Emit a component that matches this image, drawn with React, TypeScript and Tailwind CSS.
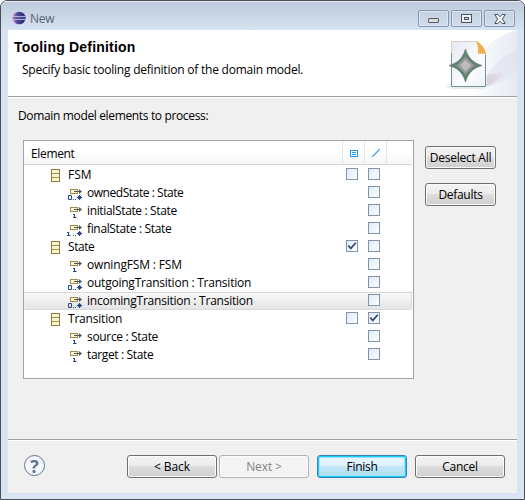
import type { ReactNode } from "react";

type Kind = "class" | "one" | "zeroMany" | "oneMany";
type Check = boolean | null;

interface Row {
  label: string;
  kind: Kind;
  node: Check;
  link: Check;
  track: string;
  selected?: boolean;
}

const rows: Row[] = [
  { label: "FSM", kind: "class", node: false, link: false, track: "tracking-[0px]" },
  { label: "ownedState : State", kind: "zeroMany", node: null, link: false, track: "tracking-[-0.45px]" },
  { label: "initialState : State", kind: "one", node: null, link: false, track: "tracking-[-0.35px]" },
  { label: "finalState : State", kind: "oneMany", node: null, link: false, track: "tracking-[-0.35px]" },
  { label: "State", kind: "class", node: true, link: false, track: "tracking-[-0.45px]" },
  { label: "owningFSM : FSM", kind: "one", node: null, link: false, track: "tracking-[-0.17px]" },
  { label: "outgoingTransition : Transition", kind: "zeroMany", node: null, link: false, track: "tracking-[-0.23px]" },
  { label: "incomingTransition : Transition", kind: "zeroMany", node: null, link: false, track: "tracking-[-0.23px]", selected: true },
  { label: "Transition", kind: "class", node: false, link: true, track: "tracking-[-0.2px]" },
  { label: "source : State", kind: "one", node: null, link: false, track: "tracking-[-0.33px]" },
  { label: "target : State", kind: "one", node: null, link: false, track: "tracking-[-0.36px]" },
];

function EclipseIcon() {
  return (
    <svg width="16" height="16" viewBox="0 0 16 16">
      <defs>
        <linearGradient id="ecl" x1="0" x2="1" y1="0" y2="0">
          <stop offset="0" stopColor="#a58bc4" />
          <stop offset=".35" stopColor="#50489a" />
          <stop offset="1" stopColor="#26246c" />
        </linearGradient>
      </defs>
      <circle cx="6.7" cy="8" r="6.3" fill="#e0bfd9" />
      <circle cx="8.3" cy="8" r="6.3" fill="url(#ecl)" />
      <path d="M2 6.5h12.5M2 9.5h12.5" stroke="#b9b8dd" strokeWidth=".9" />
      <path d="M2 8h12.5" stroke="#5b59a2" strokeWidth="1" />
    </svg>
  );
}

function WizardBanner() {
  return (
    <svg width="77" height="66" viewBox="440 30 77 66">
      <defs>
        <linearGradient id="swoosh" x1="0" x2="1" y1="0" y2="0">
          <stop offset="0" stopColor="#fff" />
          <stop offset="1" stopColor="#e6eaf3" />
        </linearGradient>
        <linearGradient id="page" x1="0" x2="1" y1="0" y2="1">
          <stop offset="0" stopColor="#e3e9f3" />
          <stop offset=".6" stopColor="#fbfcfe" />
          <stop offset="1" stopColor="#eef2f8" />
        </linearGradient>
        <linearGradient id="band" x1="0" x2="1" y1="1" y2="0">
          <stop offset="0" stopColor="#e9edf5" />
          <stop offset="1" stopColor="#dfe4ef" />
        </linearGradient>
        <linearGradient id="shade" x1="0" x2="1" y1="1" y2="0">
          <stop offset="0" stopColor="#d6ccd8" />
          <stop offset="1" stopColor="#e6e9f2" />
        </linearGradient>
      </defs>
      <path d="M517 30C497 36 482 47 472 65L468 96H517Z" fill="url(#swoosh)" />
      <path d="M517 50C503 54 494 64 486 77V88C498 84 507 80 517 72Z" fill="url(#band)" />
      <path d="M487 75L508 70C502 78 494 83 487 86Z" fill="url(#shade)" />
      <path d="M446 87L451 83H487L484 89H452Z" fill="#ecebf1" />
      <path d="M451.5 41.5H477L485.5 53.5V86.5H451.5Z" fill="url(#page)" stroke="#d8d0c2" />
      <path d="M451.5 53V86.5H485.5V55" fill="none" stroke="#6f9294" />
      <path d="M476 41C481 43 485 48 486 54L477.5 53.5C479 49 478 46 476 41Z" fill="#f4ac51" />
      <path d="M465.5 49C467.5 57 473 63 482 65.5C473 68 468 73 465.5 82C463 73 458 68 449 65.5C458 63 463 58 465.5 49Z" fill="#777a78" stroke="#737876" strokeWidth=".8" />
      <path d="M465.5 52C468 59 472 63 479 65.5C472 68 468 72 465.5 79C463 72 459 68 452 65.5C459 63 463 59 465.5 52Z" fill="#7e807e" stroke="#329568" strokeWidth="1" />
      <path d="M465.5 57L474 65.5L465.5 74L457 65.5Z" fill="#9a9b99" />
      <path d="M465.5 60L471 65.5L465.5 71L460 65.5Z" fill="#bcbdbb" />
    </svg>
  );
}

function ClassIcon() {
  return (
    <svg width="9" height="13" viewBox="0 0 9 13" shapeRendering="crispEdges">
      <path d="M.5.5h8v12h-8z" fill="#fbf7cd" stroke="#8b7b42" />
      <path d="M1 4.5h7M1 8.5h7" stroke="#a29358" />
    </svg>
  );
}

function ReferenceIcon({ kind }: { kind: Kind }) {
  return (
    <svg width="18" height="14" viewBox="0 0 18 14">
      <path d="M4.5 2.5h7v4h-7z" fill="#fdf9d2" stroke="#a08a49" shapeRendering="crispEdges" />
      <path d="M8 4.5h7" stroke="#4d555f" shapeRendering="crispEdges" />
      <path d="M13 2l3 2.5-3 2.5z" fill="#4d555f" />
      {kind === "one" && (
        <path d="M7 9.500H8.500V12.500M7 12.500h3.500" fill="none" stroke="#284a84" strokeWidth="1.1" />
      )}
      {kind === "oneMany" && (
        <path d="M1 9.500H2.500V12.500M1 12.500h3.500" fill="none" stroke="#284a84" strokeWidth="1.1" />
      )}
      {kind === "zeroMany" && (
        <rect x="2.500" y="8.500" width="3" height="4" rx=".8" fill="none" stroke="#284a84" strokeWidth="1.1" />
      )}
      {(kind === "zeroMany" || kind === "oneMany") && (
        <>
          <path d="M6.900 12h1v1h-1zM8.900 12h1v1h-1z" fill="#284a84" />
          <path d="M13.500 8v5M10.800 10.500h5.400M11.800 8.800l3.400 3.400M15.200 8.800l-3.400 3.400" stroke="#284a84" />
        </>
      )}
    </svg>
  );
}

function Checkbox({ checked }: { checked: boolean }) {
  return (
    <span className="block size-3 border border-[#8493ad] bg-linear-to-br from-[#dcebf6] to-[#fcfeff]">
      {checked && (
        <svg width="10" height="10" viewBox="0 0 10 10">
          <path d="M1.2 4.5L3.8 7.4L8.8 1.8" fill="none" stroke="#34476b" strokeWidth="1.7" />
        </svg>
      )}
    </span>
  );
}

function PushButton({ children, look = "normal", className }: { children: ReactNode; look?: "normal" | "disabled" | "primary"; className: string }) {
  const looks = {
    normal: "border-[#707070] bg-[linear-gradient(#f3f3f3_0%,#ebebeb_48%,#dddddd_50%,#cfcfcf_100%)] text-black shadow-[inset_0_0_0_1px_#fafafa]",
    disabled: "border-[#adb2b5] bg-[#f4f4f4] text-[#838383] shadow-[inset_0_0_0_1px_#fcfcfc]",
    primary: "border-[#3c7fb1] bg-[linear-gradient(#e8f5fc_0%,#dcf1fb_48%,#c2e5f8_50%,#b2def5_100%)] text-black shadow-[inset_0_0_0_1px_#18cdfb,inset_0_0_0_2px_#9be5fb]",
  };
  return (
    <button className={`flex h-[23px] items-center justify-center rounded-[3px] border whitespace-nowrap ${looks[look]} ${className}`}>
      {children}
    </button>
  );
}

function CaptionButton({ children }: { children: ReactNode }) {
  return (
    <button className="flex h-[17px] w-[31px] items-center justify-center rounded-[2px] border border-[#8996af] bg-linear-to-b from-[#c4d2e3] to-[#cfdceb] shadow-[inset_0_0_0_1px_#dce6f1]">
      {children}
    </button>
  );
}

export default function App() {
  return (
    <div className="flex h-[500px] w-[525px] flex-col overflow-hidden rounded-t-[7px] border border-[#4b4d54] bg-[#d8e4f1] px-[7px] pb-[7px] font-['Open_Sans','Noto_Sans',sans-serif] text-[12px] leading-[18px] tracking-[-0.3px] text-black">
      <div className="-mx-[7px] flex h-[29px] shrink-0 items-start bg-linear-to-b from-[#bccadb] to-[#d6e3f1] pl-[10px] shadow-[inset_0_1px_0_#e7eef6]">
        <div className="pt-[9px]"><EclipseIcon /></div>
        <span className="pt-[9px] pl-[3px] text-[#5b6470]">New</span>
        <div className="ml-auto flex gap-[2px] pt-[9px] pr-[9px]">
          <CaptionButton>
            <span className="mt-[4px] h-[5px] w-[11px] rounded-[1px] border border-[#555963] bg-[#dcdcdc]" />
          </CaptionButton>
          <CaptionButton>
            <svg width="11" height="9" viewBox="0 0 11 9" shapeRendering="crispEdges">
              <path d="M.5.5h10v8H.5z" fill="#f0f0f0" stroke="#4d5260" />
              <path d="M3.5 3.5h4v2h-4z" fill="#cbd7e6" stroke="#4d5260" />
            </svg>
          </CaptionButton>
          <CaptionButton>
            <svg width="12" height="10" viewBox="0 0 12 10">
              <path d="M.8.5h3L6 2.8 8.200.5h3L8.400 5l2.800 4.500h-3L6 7.200 3.800 9.500h-3L3.600 5Z" fill="#f4f4f4" stroke="#4d5260" />
            </svg>
          </CaptionButton>
        </div>
      </div>

      <header className="flex h-[68px] shrink-0 border-b border-white bg-white">
        <div className="flex h-[67px] w-full border-b border-[#a0a0a0]">
          <div className="flex-1">
            <h1 className="pt-[8px] pl-[6px] font-['Liberation_Sans',Arial,sans-serif] text-[14px] font-bold tracking-[0.2px]">Tooling Definition</h1>
            <p className="pt-[5px] pl-[14px] tracking-[-0.22px]">Specify basic tooling definition of the domain model.</p>
          </div>
          <WizardBanner />
        </div>
      </header>

      <main className="flex h-[341px] shrink-0 flex-col bg-[#f0f0f0] pl-[15px]">
        <p className="-ml-[5px] h-[42px] pt-[9px] tracking-[-0.35px]">Domain model elements to process:</p>
        <div className="flex">
          <section className="h-[239px] w-[391px] border border-[#a0a2a8] bg-white">
            <div className="mr-px flex h-[24px] border-b border-[#d5d5d5] bg-linear-to-b from-white from-50% to-[#f4f5f7]">
              <div className="w-[319px] border-r border-[#e3e5e8] pt-[4px] pl-[7px] tracking-[-0.35px]">Element</div>
              <div className="flex w-[22px] items-center justify-center border-r border-[#e3e5e8] pt-[2px]">
                <svg width="8" height="7" viewBox="0 0 8 7" shapeRendering="crispEdges">
                  <path d="M.5.5h7v6h-7zM2 2.5h4M2 4.5h4" fill="none" stroke="#1c9af0" />
                </svg>
              </div>
              <div className="flex w-[22px] items-center justify-center border-r border-[#e3e5e8]">
                <svg width="8" height="8" viewBox="0 0 8 8"><path d="M.3 7.7L7.7.3" stroke="#1c9af0" strokeWidth="1.2" /></svg>
              </div>
            </div>
            {rows.map((row) => (
              <div key={row.label} className={`grid h-[18px] grid-cols-[322px_22px_22px] ${row.selected ? "mr-px rounded-[2px] bg-[linear-gradient(#ffffff_0,#ffffff_1px,#d9d9d9_1px,#d9d9d9_2px,#f8f8f8_2px,#e5e5e5_100%)] shadow-[inset_-1px_0_0_#d9d9d9,0_1px_0_#d9d9d9]" : ""}`}>
                <div className={`flex whitespace-nowrap ${row.kind === "class" ? "pl-[27px]" : "pl-[42px]"}`}>
                  <span className={row.kind === "class" ? "w-[17px] pt-[4px]" : "w-[21px] pt-[4px]"}>
                    {row.kind === "class" ? <ClassIcon /> : <ReferenceIcon kind={row.kind} />}
                  </span>
                  <span className={`pt-px ${row.track}`}>{row.label}</span>
                </div>
                <div className="pt-[3px]">{row.node !== null && <Checkbox checked={row.node} />}</div>
                <div className="pt-[3px]">{row.link !== null && <Checkbox checked={row.link} />}</div>
              </div>
            ))}
          </section>
          <div className="ml-[11px] flex flex-col gap-[14px] pt-[6px]">
            <PushButton className="w-[71px] tracking-[-0.25px]">Deselect All</PushButton>
            <PushButton className="w-[71px]">Defaults</PushButton>
          </div>
        </div>
      </main>

      <footer className="flex h-[54px] shrink-0 items-start border-t border-[#a0a0a0] bg-[#f0f0f0] shadow-[inset_0_1px_0_white]">
        <div className="mt-[15px] ml-[16px] flex size-[21px] items-center justify-center rounded-full border border-[#5e7397] bg-[#f5f7fb] text-[18px] leading-none font-bold text-[#5f7398]">?</div>
        <div className="ml-[82px] flex pt-[15px]">
          <PushButton className="w-[90px] tracking-[-0.1px]">&lt; Back</PushButton>
          <PushButton className="ml-[2px] w-[90px] tracking-[-0.1px]" look="disabled">Next &gt;</PushButton>
          <PushButton className="ml-[8px] w-[90px]" look="primary">Finish</PushButton>
          <PushButton className="ml-[8px] w-[90px]">Cancel</PushButton>
        </div>
      </footer>
    </div>
  );
}
